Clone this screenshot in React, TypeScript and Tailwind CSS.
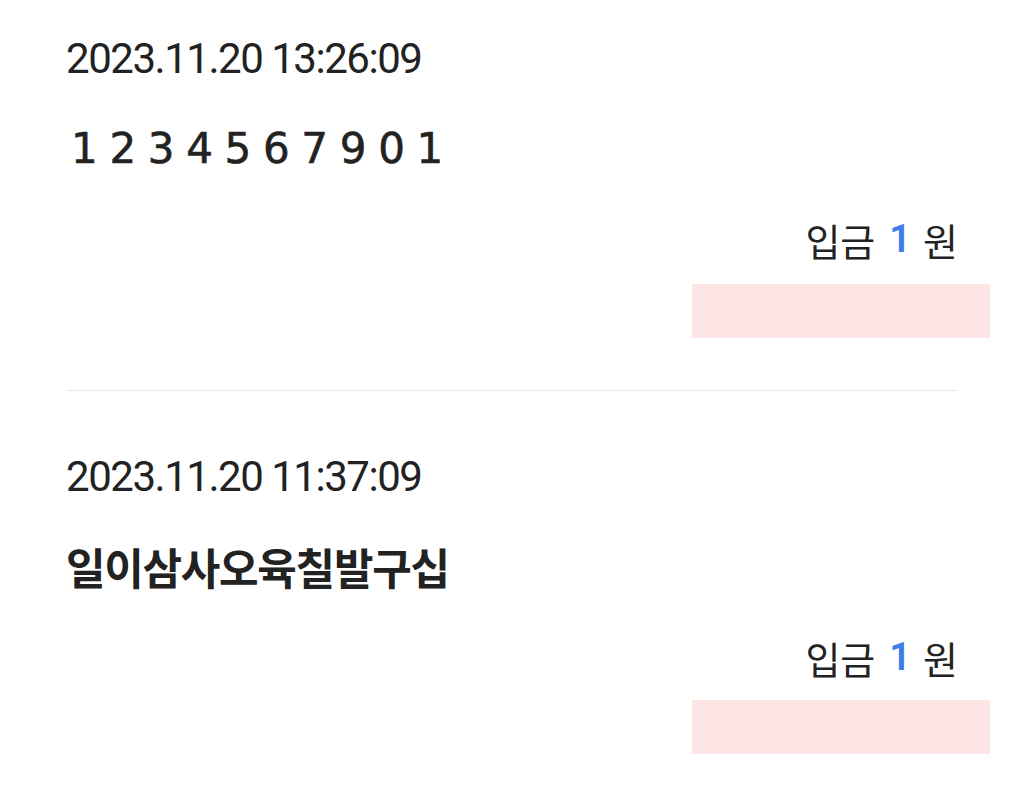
import React from 'react';

type Deposit = {
  date: string;
  memo: string;
  amount: number;
  memoClass: string;
};

const deposits: Deposit[] = [
  {
    date: '2023.11.20 13:26:09',
    memo: '1 2 3 4 5 6 7 9 0 1',
    amount: 1,
    memoClass: "font-['DejaVu_Sans',sans-serif] font-normal text-[42px] tracking-[-0.02em] pl-[5px] [-webkit-text-stroke:0.6px_#222]",
  },
  {
    date: '2023.11.20 11:37:09',
    memo: '일이삼사오육칠발구십',
    amount: 1,
    memoClass: "font-['Noto_Sans_CJK_KR',sans-serif] font-bold text-[43px] tracking-[-0.03em]",
  },
];

function DepositItem({ item, first }: { item: Deposit; first: boolean }) {
  return (
    <div className={`flex flex-col ${first ? 'pt-[34px]' : 'pt-[61px]'}`}>
      <div className="h-[48px] flex items-center font-['Roboto',sans-serif] text-[42px] text-[#222] tracking-[-0.035em]">
        {item.date}
      </div>
      <div className={`h-[48px] mt-[42px] flex items-center text-[#222] ${item.memoClass}`}>
        {item.memo}
      </div>
      <div className="h-[48px] mt-[43px] flex items-center justify-end font-['Noto_Sans_CJK_KR',sans-serif] text-[38px] text-[#222]">
        <span>입금</span>
        <span className="ml-[14px] font-['Roboto',sans-serif] font-semibold text-[#3b7de9]">{item.amount}</span>
        <span className="ml-[12px]">원</span>
      </div>
      <div className={`self-end -mr-[32px] h-[54px] w-[298px] bg-[#fde5e5] ${first ? 'mt-[21px]' : 'mt-[19px]'}`} />
    </div>
  );
}

export default function App() {
  return (
    <div className="w-[1024px] h-[800px] overflow-hidden bg-white">
      <div className="px-[66px]">
        {deposits.map((d, i) => (
          <div key={i}>
            {i > 0 && <div className="h-px bg-[#e8e8e8] mt-[52px]" />}
            <DepositItem item={d} first={i === 0} />
          </div>
        ))}
      </div>
    </div>
  );
}
